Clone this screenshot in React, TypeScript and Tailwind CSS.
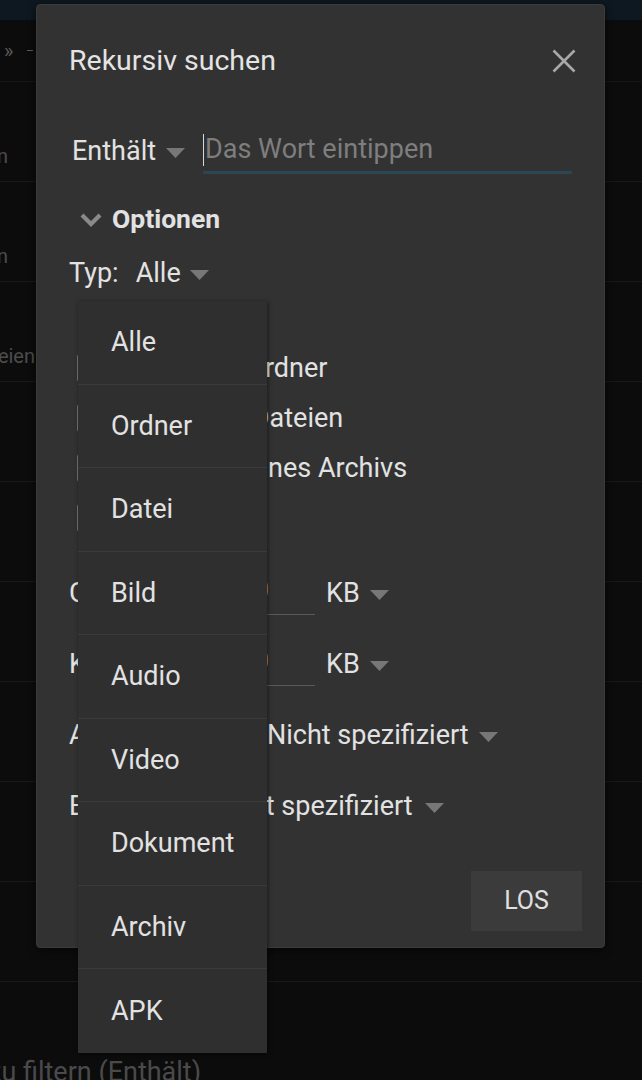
import React from "react";

const Tri = ({ className = "" }: { className?: string }) => (
  <svg width="19" height="10" viewBox="0 0 19 10" className={className}>
    <path d="M0 0 L19 0 L9.5 10 Z" fill="#777777" />
  </svg>
);

const menuItems = ["Alle", "Ordner", "Datei", "Bild", "Audio", "Video", "Dokument", "Archiv", "APK"];

const checks = ["Auch Unterordner", "Versteckte Dateien", "Inkl. Inhalt eines Archivs", "Regex"];

const bgRows = [
  { t: "Bilder suchen", end: 8 },
  { t: "Videos suchen", end: 8 },
  { t: "Dateien", end: 35 },
  { t: "", end: 0 },
  { t: "", end: 0 },
  { t: "", end: 0 },
  { t: "", end: 0 },
  { t: "", end: 0 },
  { t: "", end: 0 },
];

export default function App() {
  return (
    <div className="relative h-[1080px] w-full overflow-hidden bg-[#0c0c0c] font-['Roboto',sans-serif] text-[#e2e2e2]">
      {/* background list */}
      <div className="h-[20px] bg-[#0d1820]" />
      <div className="flex h-[62px] items-center border-b border-[#161616] pl-[4px] text-[20px] text-[#5a5a5a]">
        <span>»</span>
        <span className="ml-[14px] h-[1px] w-[6px] bg-[#5a5a5a]" />
      </div>
      {bgRows.map((r, i) => (
        <div key={i} className="flex h-[100px] items-end border-b border-[#191919] pb-[10px] text-[20px] text-[#4c4c4c]">
          <span className="whitespace-nowrap text-right" style={{ width: 200, marginLeft: r.end - 200 }}>
            {r.t}
          </span>
        </div>
      ))}
      <div className="-ml-[12px] whitespace-nowrap pt-[70px] text-[27px] text-[#4a4a4a]">zu filtern (Enthält)</div>

      {/* dialog */}
      <div className="absolute left-[36px] top-[4px] flex h-[944px] w-[569px] flex-col rounded-[4px] border border-[#3b3b3b] bg-[#323232] pl-[32px] pr-[22px] shadow-[0_2px_8px_rgba(0,0,0,0.6)]">
        <div className="mt-[40px] flex h-[32px] items-center justify-between">
          <span className="text-[28.5px] text-[#e4e4e4]">Rekursiv suchen</span>
          <svg width="24" height="24" viewBox="0 0 24 24" className="mr-[6px]">
            <path d="M1.5 1.5 L22.5 22.5 M22.5 1.5 L1.5 22.5" stroke="#a8a8a8" strokeWidth="2.6" />
          </svg>
        </div>

        <div className="mt-[51px] flex h-[46px] items-center">
          <span className="ml-[3px] text-[27px]">Enthält</span>
          <Tri className="ml-[10px] mt-[4px]" />
          <div className="ml-[18px] mr-[10px] flex h-full flex-1 items-center border-b-[3px] border-[#2c4655]">
            <span className="h-[32px] w-[1px] bg-[#d8d8d8]" />
            <span className="ml-[1px] text-[27px] text-[#7e7e7e]">Das Wort eintippen</span>
          </div>
        </div>

        <div className="mt-[27px] flex h-[36px] items-center">
          <svg width="22" height="14" viewBox="0 0 22 14" className="ml-[11px] mt-[1px]">
            <path d="M2 2 L11 11 L20 2" stroke="#8a8a8a" strokeWidth="4.2" fill="none" />
          </svg>
          <span className="ml-[10px] text-[26.5px] font-bold text-[#e2e2e2]">Optionen</span>
        </div>

        <div className="mt-[18px] flex h-[36px] items-center text-[27px]">
          <span>Typ:</span>
          <span className="ml-[17px]">Alle</span>
          <Tri className="ml-[9px] mt-[4px]" />
        </div>

        <div className="mt-[52px] flex flex-col">
          {checks.map((c) => (
            <div key={c} className="flex h-[50px] items-center">
              <span className="ml-[8px] h-[28px] w-[28px] rounded-[3px] border-2 border-[#777777]" />
              <span className="ml-[12px] whitespace-nowrap text-[27px]">{c}</span>
            </div>
          ))}
        </div>

        <div className="mt-[25px] flex flex-col gap-[21px] text-[27px]">
          <div className="flex h-[50px] items-center">
            <span className="w-[140px] whitespace-nowrap">Größer als</span>
            <div className="flex h-[44px] w-[106px] items-end justify-end border-b border-[#5a5a5a] pb-[4px]">
              <span className="mr-[46px]">0</span>
            </div>
            <span className="ml-[11px]">KB</span>
            <Tri className="ml-[10px] mt-[4px]" />
          </div>
          <div className="flex h-[50px] items-center">
            <span className="w-[140px] whitespace-nowrap">Kleiner als</span>
            <div className="flex h-[44px] w-[106px] items-end justify-end border-b border-[#5a5a5a] pb-[4px]">
              <span className="mr-[46px]">0</span>
            </div>
            <span className="ml-[11px]">KB</span>
            <Tri className="ml-[10px] mt-[4px]" />
          </div>
          <div className="flex h-[50px] items-center">
            <span className="w-[198px] whitespace-nowrap">Aktualisiert ab:</span>
            <span className="whitespace-nowrap">Nicht spezifiziert</span>
            <Tri className="ml-[10px] mt-[4px]" />
          </div>
          <div className="flex h-[50px] items-center">
            <span className="w-[142px] whitespace-nowrap">Bis:</span>
            <span className="whitespace-nowrap">Nicht spezifiziert</span>
            <Tri className="ml-[12px] mt-[4px]" />
          </div>
        </div>

        <div className="mt-[40px] flex justify-end">
          <button className="flex h-[60px] w-[111px] items-center justify-center bg-[#3b3b3b] text-[25px] text-[#e0e0e0]">
            LOS
          </button>
        </div>
      </div>

      {/* dropdown menu */}
      <div className="absolute left-[78px] top-[301px] flex w-[189px] flex-col bg-[#2f2f2f] shadow-[1px_1px_4px_rgba(0,0,0,0.5)]">
        {menuItems.map((m, i) => (
          <div
            key={m}
            className={
              i < menuItems.length - 1
                ? "flex h-[83.5px] items-center border-b border-[#3a3a3a] pl-[33px] text-[27px]"
                : "flex h-[83.5px] items-center pl-[33px] text-[27px]"
            }
          >
            {m}
          </div>
        ))}
      </div>
    </div>
  );
}
